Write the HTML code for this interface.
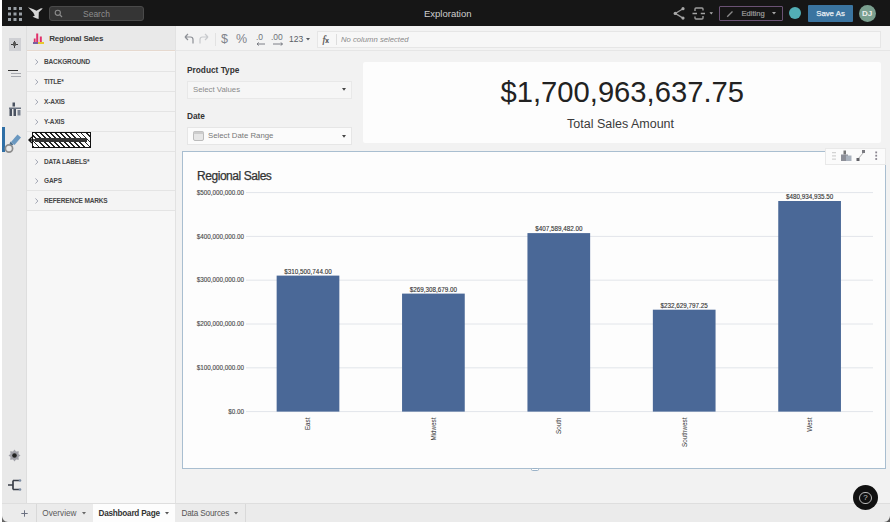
<!DOCTYPE html>
<html><head><meta charset="utf-8">
<style>
*{box-sizing:border-box;margin:0;padding:0}
html,body{width:890px;height:522px;overflow:hidden;background:#fff;font-family:"Liberation Sans",sans-serif}
.abs{position:absolute}
#app{position:absolute;left:2px;top:0;width:888px;height:522px;background:#f2f2f2;overflow:hidden}
#topbar{position:absolute;left:0;top:0;width:888px;height:26.5px;background:#161616}
#rail{position:absolute;left:0;top:26px;width:25px;height:477px;background:#e9e9e9;border-right:1px solid #dedede}
#panel{position:absolute;left:25px;top:26px;width:149px;height:477px;background:#f7f7f7;border-right:1px solid #e2e2e2}
#phead{position:absolute;left:0;top:0;width:148px;height:25px;background:#e9e9e9;border-bottom:1px solid #e6d9cf}
.row{position:absolute;left:0;width:148px;height:20px;background:#f4f4f4;border-bottom:1px solid #e4e4e4;font-size:6.5px;font-weight:bold;color:#474747;letter-spacing:-0.15px}
.row .chev{position:absolute;left:7.5px;top:7px;width:3.5px;height:6px}
.row .t{position:absolute;left:17px;top:6px;white-space:nowrap}
#toolbar{position:absolute;left:174px;top:26px;width:714px;height:25px;background:#f3f3f3;border-bottom:1px solid #e6e6e6}
#tabs{position:absolute;left:0;top:503px;width:888px;height:19px;background:#ebebeb;border-top:1px solid #dedede}
.tt{font-size:8.2px;white-space:nowrap;line-height:10px}
</style></head>
<body>
<div id="app">
  <div id="topbar">
    <!-- grid -->
    <svg class="abs" style="left:6px;top:7px" width="14" height="14" viewBox="0 0 14 14" fill="#9aa0a6">
      <rect x="0" y="0" width="3" height="3"/><rect x="5.5" y="0" width="3" height="3"/><rect x="11" y="0" width="3" height="3"/>
      <rect x="0" y="5.5" width="3" height="3"/><rect x="5.5" y="5.5" width="3" height="3"/><rect x="11" y="5.5" width="3" height="3"/>
      <rect x="0" y="11" width="3" height="3"/><rect x="5.5" y="11" width="3" height="3"/><rect x="11" y="11" width="3" height="3"/>
    </svg>
    <!-- logo -->
    <svg class="abs" style="left:24px;top:5px" width="20" height="16" viewBox="26 5 20 16">
      <path d="M28 7.3 L33.5 9.2 L36.5 10.8 L41 8.2 L42.8 8.6 L38.8 12.2 L38.6 19 L36.8 18.6 L32.6 16.8 L34.8 15.6 L33.2 12.6 Z" fill="#d6d6d6"/>
    </svg>
    <div class="abs" style="left:47px;top:6px;width:95px;height:15px;background:#353535;border:1px solid #4a4a4a;border-radius:3px"></div>
    <svg class="abs" style="left:52px;top:9px" width="9" height="9" viewBox="0 0 9 9"><circle cx="3.8" cy="3.8" r="2.6" stroke="#8a8a8a" stroke-width="1.1" fill="none"/><path d="M5.7 5.7 L8 8" stroke="#8a8a8a" stroke-width="1.2"/></svg>
    <div class="abs" style="left:81px;top:8.5px;font-size:8.5px;color:#8d8d8d">Search</div>
    <div class="abs" style="left:422px;top:8px;font-size:9.5px;color:#cfcfcf">Exploration</div>
    <!-- share -->
    
    <!-- sync -->
    
    
    <div class="abs" style="left:717px;top:5.5px;width:64px;height:15.5px;border:1px solid #6a5274;border-radius:1px"></div>
    <svg class="abs" style="left:724px;top:9.5px" width="8" height="8" viewBox="0 0 8 8"><path d="M1.2 6.8 L6.5 1.5" stroke="#8a8a8a" stroke-width="1.3"/></svg>
    <div class="abs" style="left:739.5px;top:8.5px;font-size:7.6px;color:#9c9c9c;-webkit-text-stroke:0.2px #9c9c9c">Editing</div>
    <svg class="abs" style="left:769.5px;top:12px" width="4" height="3" viewBox="0 0 4 3"><path d="M0 0 H4 L2 2.6Z" fill="#a8a8a8"/></svg>
    <div class="abs" style="left:787px;top:7px;width:12px;height:12px;border-radius:50%;background:#52aeb5"></div>
    <div class="abs" style="left:806px;top:4.5px;width:45px;height:17px;background:#3a74a0;border-radius:1px;color:#e8eef2;font-size:7.8px;-webkit-text-stroke:0.25px #e8eef2;text-align:center;line-height:17px">Save As</div>
    <div class="abs" style="left:856.5px;top:4.6px;width:17px;height:17px;border-radius:50%;background:#7a9f8f;color:#eee;font-size:8px;font-weight:bold;text-align:center;line-height:17px">DJ</div>
  </div>

  <div id="rail">
    <div class="abs" style="left:6.5px;top:12px;width:12px;height:12.5px;background:#cfd0d4"></div>
    <div class="abs" style="left:12px;top:15px;width:1.2px;height:6.5px;background:#3a3a3a"></div>
    <div class="abs" style="left:9.3px;top:17.6px;width:6.5px;height:1.2px;background:#3a3a3a"></div>
    <div class="abs" style="left:10.8px;top:16.4px;width:3.6px;height:3.6px;background:#555;border-radius:1px"></div>
    <div class="abs" style="left:6px;top:43.5px;width:10px;height:1.6px;background:#333"></div>
    <div class="abs" style="left:9px;top:46.5px;width:10px;height:1.2px;background:#a8aab0"></div>
    <div class="abs" style="left:9px;top:49.5px;width:10px;height:1.2px;background:#a8aab0"></div>
    <svg class="abs" style="left:6px;top:76px" width="14" height="15" viewBox="0 0 14 15"><path d="M4.5 0.5 h2.5 v4 h-2.5z" fill="#4a5260"/><path d="M1 5.5 h12 v1.5 h-12z" fill="#6a7280"/><path d="M1.5 7 h2.5 v7 h-2.5z M5.5 7 h2.5 v7 h-2.5z" fill="#4a5260"/><path d="M9.5 8 h3 v5.5 h-3z" fill="#7a8290"/></svg>
    <div class="abs" style="left:0;top:101px;width:3px;height:24.5px;background:#2f6fa6"></div>
    <svg class="abs" style="left:0px;top:100px" width="24" height="30" viewBox="2 126 24 30"><path d="M11 142 L17.5 134.5 L21 137.5 L14.5 145 Z" fill="#6a98c0"/><path d="M10.5 141.5 L13.5 144.5 L11 146 L9.5 144Z" fill="#4a7090"/><circle cx="9" cy="148.5" r="3.6" fill="none" stroke="#8c8c8c" stroke-width="1.7"/></svg>
    <svg class="abs" style="left:6px;top:423px" width="13" height="13" viewBox="0 0 13 13"><path d="M6.5 0.5 L8 2.5 L10.8 2.2 L10.5 5 L12.5 6.5 L10.5 8 L10.8 10.8 L8 10.5 L6.5 12.5 L5 10.5 L2.2 10.8 L2.5 8 L0.5 6.5 L2.5 5 L2.2 2.2 L5 2.5 Z" fill="#a0a0a8"/><circle cx="6.5" cy="6.5" r="2.3" fill="#222"/></svg>
    <svg class="abs" style="left:6px;top:453px" width="14" height="12" viewBox="0 0 14 12"><path d="M0 6 H5 M5 1.5 H11 M5 10.5 H11 M5 1.5 V10.5" stroke="#3a3f48" stroke-width="1.7" fill="none"/><circle cx="12" cy="1.5" r="1.3" fill="#7a8aa0"/><circle cx="12" cy="10.5" r="1.3" fill="#7a8aa0"/></svg>
  </div>
  <div id="panel">
    <div id="phead">
      <svg class="abs" style="left:6px;top:7px" width="11" height="11" viewBox="0 0 11 11">
        <rect x="3.2" y="0.5" width="2" height="8.5" fill="#e0306a"/><rect x="6.8" y="3.5" width="2" height="5.5" fill="#e0306a"/><rect x="0.8" y="5.5" width="1.8" height="3.5" fill="#e0306a"/>
        <rect x="0" y="9" width="5" height="2" fill="#7a5fa0"/><rect x="5" y="9" width="6" height="2" fill="#e8c830"/>
      </svg>
      <div class="abs" style="left:22.2px;top:7.5px;font-size:8px;letter-spacing:-0.2px;font-weight:bold;color:#3a3a3a">Regional Sales</div>
    </div>
<div class="row" style="top:26.0px"><svg class="chev" viewBox="0 0 4 7"><path d="M0.5 0.5 L3.3 3.5 L0.5 6.5" stroke="#8a8fa0" stroke-width="0.9" fill="none"/></svg><div class="t">BACKGROUND</div></div>
<div class="row" style="top:45.9px"><svg class="chev" viewBox="0 0 4 7"><path d="M0.5 0.5 L3.3 3.5 L0.5 6.5" stroke="#8a8fa0" stroke-width="0.9" fill="none"/></svg><div class="t">TITLE*</div></div>
<div class="row" style="top:65.8px"><svg class="chev" viewBox="0 0 4 7"><path d="M0.5 0.5 L3.3 3.5 L0.5 6.5" stroke="#8a8fa0" stroke-width="0.9" fill="none"/></svg><div class="t">X-AXIS</div></div>
<div class="row" style="top:85.7px"><svg class="chev" viewBox="0 0 4 7"><path d="M0.5 0.5 L3.3 3.5 L0.5 6.5" stroke="#8a8fa0" stroke-width="0.9" fill="none"/></svg><div class="t">Y-AXIS</div></div>
<div class="row" style="top:105.6px"><div class="abs" style="left:4.5px;top:0.2px;width:59px;height:16px;border:1px solid #111;background:repeating-linear-gradient(45deg,#222 0 1.3px,#fafafa 1.3px 3.6px)"></div><div class="abs" style="left:8px;top:6px;width:52px;height:4px;background:#333"></div><svg class="abs" style="left:1px;top:4px" width="8" height="8" viewBox="0 0 8 8"><path d="M7 4 H1.5 M4 1 L1 4 L4 7" stroke="#111" stroke-width="1.4" fill="none"/></svg></div>
<div class="row" style="top:125.5px"><svg class="chev" viewBox="0 0 4 7"><path d="M0.5 0.5 L3.3 3.5 L0.5 6.5" stroke="#8a8fa0" stroke-width="0.9" fill="none"/></svg><div class="t">DATA LABELS*</div></div>
<div class="row" style="top:145.4px"><svg class="chev" viewBox="0 0 4 7"><path d="M0.5 0.5 L3.3 3.5 L0.5 6.5" stroke="#8a8fa0" stroke-width="0.9" fill="none"/></svg><div class="t">GAPS</div></div>
<div class="row" style="top:165.3px"><svg class="chev" viewBox="0 0 4 7"><path d="M0.5 0.5 L3.3 3.5 L0.5 6.5" stroke="#8a8fa0" stroke-width="0.9" fill="none"/></svg><div class="t">REFERENCE MARKS</div></div>
  </div>

  <div id="toolbar"></div>

  <div id="tabs"></div>
</div>

<div id="ov" style="position:absolute;left:0;top:0;width:890px;height:522px">

  <svg class="abs" style="left:0;top:0" width="890" height="26" viewBox="0 0 890 26">
    <path d="M683 8.7 L675.3 13.4 L683 18.1" stroke="#9a9a9a" stroke-width="1.3" fill="none"/>
    <circle cx="683" cy="8.7" r="1.6" fill="#a8a8a8"/><circle cx="675.3" cy="13.4" r="1.7" fill="#a8a8a8"/><circle cx="683" cy="18.1" r="1.6" fill="#a8a8a8"/>
    <path d="M695 11 V9 Q695 8 696 8 H702 Q703 8 703 9 V10.5 M703 16 V18 Q703 19 702 19 H696 Q695 19 695 18 V16.5" stroke="#9c9c9c" stroke-width="1.4" fill="none"/>
    <path d="M692.5 13.5 H697 M700.8 13.5 H705" stroke="#a5a5a5" stroke-width="1.4"/>
    <path d="M709.5 12.3 H713 L711.25 14.6 Z" fill="#b0b0b0"/>
  </svg>
  <!-- toolbar -->
  <svg class="abs" style="left:184px;top:33px" width="10" height="11" viewBox="0 0 10 11"><path d="M1 4 L4 1 M1 4 L4 7 M1 4 H6.5 Q9 4 9 6.5 V10.5" stroke="#8d9096" stroke-width="1.2" fill="none"/></svg>
  <svg class="abs" style="left:199px;top:33px" width="10" height="11" viewBox="0 0 10 11"><path d="M9 4 L6 1 M9 4 L6 7 M9 4 H3.5 Q1 4 1 6.5 V10.5" stroke="#c8cacd" stroke-width="1.2" fill="none"/></svg>
  <div class="abs" style="left:214.5px;top:33px;width:1px;height:13px;background:#e2e2e2"></div>
  <div class="abs" style="left:221px;top:32px;font-size:12.5px;color:#80848b">$</div>
  <div class="abs" style="left:236px;top:32px;font-size:12.5px;color:#80848b">%</div>
  <div class="abs" style="left:256px;top:32px;font-size:8.5px;color:#6f737a">.0</div>
  <svg class="abs" style="left:256px;top:41.5px" width="10" height="4" viewBox="0 0 10 4"><path d="M1 2 H9 M1 2 L2.8 0.5 M1 2 L2.8 3.5" stroke="#6f737a" stroke-width="0.9" fill="none"/></svg>
  <div class="abs" style="left:271px;top:32px;font-size:8.5px;color:#6f737a">.00</div>
  <svg class="abs" style="left:272px;top:41.5px" width="12" height="4" viewBox="0 0 12 4"><path d="M1 2 H10.5 M10.5 2 L8.7 0.5 M10.5 2 L8.7 3.5" stroke="#6f737a" stroke-width="0.9" fill="none"/></svg>
  <div class="abs" style="left:289px;top:34px;font-size:8.5px;color:#5a5e65">123</div>
  <svg class="abs" style="left:305.5px;top:38.3px" width="4" height="3" viewBox="0 0 4 3"><path d="M0 0 H4 L2 2.6Z" fill="#555a60"/></svg>
  <div class="abs" style="left:317px;top:31px;width:564px;height:17px;border:1px solid #e6e6e6;background:#f7f7f7"></div>
  <div class="abs" style="left:322.5px;top:33.5px;font-size:10px;font-family:'Liberation Serif',serif;font-style:italic;color:#555;-webkit-text-stroke:0.2px #555">f<span style="font-size:6.5px;font-style:normal;font-family:'Liberation Sans',sans-serif;font-weight:bold">x</span></div>
  <div class="abs" style="left:335.5px;top:34px;width:1px;height:11px;background:#ddd"></div>
  <div class="abs" style="left:341px;top:35.2px;font-size:7.7px;font-style:italic;color:#8a8a8a">No column selected</div>

  <!-- filters -->
  <div class="abs" style="left:187px;top:65px;font-size:8.3px;font-weight:bold;color:#333">Product Type</div>
  <div class="abs" style="left:187px;top:81px;width:165px;height:18px;border:1px solid #e8e8e8;background:#f6f6f6"></div>
  <div class="abs" style="left:193px;top:85px;font-size:7.8px;color:#8a8a8a">Select Values</div>
  <svg class="abs" style="left:341.5px;top:88px" width="4" height="3" viewBox="0 0 4 3"><path d="M0 0 H4 L2 2.8Z" fill="#444"/></svg>
  <div class="abs" style="left:187px;top:111px;font-size:8.3px;font-weight:bold;color:#333">Date</div>
  <div class="abs" style="left:187px;top:127px;width:165px;height:18px;border:1px solid #e6e6e6;background:#fbfbfb"></div>
  <svg class="abs" style="left:193px;top:131px" width="11" height="10" viewBox="0 0 11 10"><rect x="0.5" y="0.5" width="10" height="9" rx="1.5" fill="#e6e6e6" stroke="#bbb"/><rect x="0.5" y="0.5" width="10" height="2.5" fill="#ccc"/></svg>
  <div class="abs" style="left:208px;top:131px;font-size:7.8px;color:#777">Select Date Range</div>
  <svg class="abs" style="left:341.5px;top:134.5px" width="4" height="3" viewBox="0 0 4 3"><path d="M0 0 H4 L2 2.8Z" fill="#444"/></svg>

  <!-- KPI -->
  <div class="abs" style="left:363px;top:62px;width:518px;height:81px;background:#fdfdfd;border-radius:2px"></div>
  <div class="abs" style="left:500.5px;top:76px;font-size:29.2px;color:#222;white-space:nowrap" id="kpi">$1,700,963,637.75</div>
  <div class="abs" style="left:567px;top:117px;font-size:12.5px;color:#3a3a3a;white-space:nowrap" id="kpil">Total Sales Amount</div>

  <!-- chart box -->
  <div class="abs" style="left:182px;top:151px;width:704px;height:318px;border:1px solid #a9bed0;background:#fdfdfd"></div>
  <div class="abs" style="left:824.5px;top:147.5px;width:61px;height:17.5px;border:1px solid #e9e9e9;background:#fbfbfb"></div>
  <svg class="abs" style="left:820px;top:142px" width="70" height="28" viewBox="820 142 70 28">
    <path d="M832 152.7 H836 M832 155.9 H836 M832 159.1 H836" stroke="#c8c8c8" stroke-width="1"/>
    <path d="M843.5 150.5 h2.5 v4 h-2.5z" fill="#777"/>
    <path d="M841 154.5 h7 v6.5 h-7z" fill="#8d8f98"/>
    <path d="M846 155.5 h5.5 v5.5 h-5.5z" fill="#aab2bd"/>
    <path d="M858 159 L863.5 152.5" stroke="#999" stroke-width="0.8"/>
    <rect x="862" y="150" width="3" height="3" fill="#7a7a80"/>
    <rect x="856.5" y="158" width="3" height="3" fill="#606066"/>
    <rect x="875.3" y="151.5" width="1.8" height="1.8" fill="#8a8590"/>
    <rect x="875.3" y="154.8" width="1.8" height="1.8" fill="#8a8590"/>
    <rect x="875.3" y="158.1" width="1.8" height="1.8" fill="#8a8590"/>
  </svg>
  <div class="abs" style="left:531px;top:467.5px;width:8px;height:3px;border:1px solid #9bb3c8;border-radius:2px;background:#fff"></div>
  <div class="abs" style="left:197px;top:168.5px;font-size:12px;letter-spacing:-0.45px;-webkit-text-stroke:0.25px #333;color:#333;white-space:nowrap" id="ctitle">Regional Sales</div>
  <svg class="abs" style="left:0;top:0" width="890" height="522" viewBox="0 0 890 522" font-family="Liberation Sans, sans-serif"><line x1="246" y1="411.6" x2="873" y2="411.6" stroke="#e2e5ea" stroke-width="1"/><text x="244" y="413.8" font-size="6.3" fill="#4a4a4a" stroke="#4a4a4a" stroke-width="0.12" text-anchor="end">$0.00</text><line x1="246" y1="367.8" x2="873" y2="367.8" stroke="#e2e5ea" stroke-width="1"/><text x="244" y="370.0" font-size="6.3" fill="#4a4a4a" stroke="#4a4a4a" stroke-width="0.12" text-anchor="end">$100,000,000.00</text><line x1="246" y1="324.0" x2="873" y2="324.0" stroke="#e2e5ea" stroke-width="1"/><text x="244" y="326.2" font-size="6.3" fill="#4a4a4a" stroke="#4a4a4a" stroke-width="0.12" text-anchor="end">$200,000,000.00</text><line x1="246" y1="280.2" x2="873" y2="280.2" stroke="#e2e5ea" stroke-width="1"/><text x="244" y="282.4" font-size="6.3" fill="#4a4a4a" stroke="#4a4a4a" stroke-width="0.12" text-anchor="end">$300,000,000.00</text><line x1="246" y1="236.4" x2="873" y2="236.4" stroke="#e2e5ea" stroke-width="1"/><text x="244" y="238.6" font-size="6.3" fill="#4a4a4a" stroke="#4a4a4a" stroke-width="0.12" text-anchor="end">$400,000,000.00</text><line x1="246" y1="192.6" x2="873" y2="192.6" stroke="#e2e5ea" stroke-width="1"/><text x="244" y="194.8" font-size="6.3" fill="#4a4a4a" stroke="#4a4a4a" stroke-width="0.12" text-anchor="end">$500,000,000.00</text><rect x="276.65" y="275.6" width="62.7" height="136.0" fill="#4a6897"/><text x="308.0" y="273.6" font-size="6.3" fill="#333" stroke="#333" stroke-width="0.12" text-anchor="middle">$310,500,744.00</text><text transform="translate(310.4,417.5) rotate(-90)" font-size="6.3" fill="#333" text-anchor="end">East</text><rect x="402.05" y="293.6" width="62.7" height="118.0" fill="#4a6897"/><text x="433.4" y="291.6" font-size="6.3" fill="#333" stroke="#333" stroke-width="0.12" text-anchor="middle">$269,308,679.00</text><text transform="translate(435.8,417.5) rotate(-90)" font-size="6.3" fill="#333" text-anchor="end">Midwest</text><rect x="527.45" y="233.1" width="62.7" height="178.5" fill="#4a6897"/><text x="558.8" y="231.1" font-size="6.3" fill="#333" stroke="#333" stroke-width="0.12" text-anchor="middle">$407,589,482.00</text><text transform="translate(561.2,417.5) rotate(-90)" font-size="6.3" fill="#333" text-anchor="end">South</text><rect x="652.85" y="309.7" width="62.7" height="101.9" fill="#4a6897"/><text x="684.2" y="307.7" font-size="6.3" fill="#333" stroke="#333" stroke-width="0.12" text-anchor="middle">$232,629,797.25</text><text transform="translate(686.6,417.5) rotate(-90)" font-size="6.3" fill="#333" text-anchor="end">Southwest</text><rect x="778.25" y="201.0" width="62.7" height="210.6" fill="#4a6897"/><text x="809.6" y="199.0" font-size="6.3" fill="#333" stroke="#333" stroke-width="0.12" text-anchor="middle">$480,934,935.50</text><text transform="translate(812.0,417.5) rotate(-90)" font-size="6.3" fill="#333" text-anchor="end">West</text></svg>


  <!-- tabs -->
  <svg class="abs" style="left:21px;top:509.5px" width="7" height="7" viewBox="0 0 7 7"><path d="M3.5 0.3 V6.7 M0.3 3.5 H6.7" stroke="#6a7080" stroke-width="1"/></svg>
  <div class="abs" style="left:36px;top:504px;width:1px;height:18px;background:#d9d9d9"></div>
  <div class="abs tt" style="left:42.3px;top:508.7px;color:#5a5a5a">Overview</div>
  <svg class="abs" style="left:82px;top:512px" width="4" height="3" viewBox="0 0 4 3"><path d="M0 0 H4 L2 2.6Z" fill="#666"/></svg>
  <div class="abs" style="left:93px;top:504px;width:82px;height:18px;background:#fdfdfd"></div>
  <div class="abs tt" style="left:98.6px;top:508.7px;color:#333;font-weight:bold;letter-spacing:-0.25px">Dashboard Page</div>
  <svg class="abs" style="left:164.5px;top:512px" width="4" height="3" viewBox="0 0 4 3"><path d="M0 0 H4 L2 2.6Z" fill="#555"/></svg>
  <div class="abs tt" style="left:181.4px;top:508.7px;color:#555;letter-spacing:-0.15px">Data Sources</div>
  <svg class="abs" style="left:233.7px;top:512px" width="4" height="3" viewBox="0 0 4 3"><path d="M0 0 H4 L2 2.6Z" fill="#666"/></svg>
  <div class="abs" style="left:245px;top:504px;width:1px;height:18px;background:#d9d9d9"></div>

  <svg class="abs" style="left:0;top:512px" width="10" height="10" viewBox="0 0 10 10"><path d="M2 4 Q2.5 9.5 8 10 H2 Z" fill="#666"/></svg>
  <svg class="abs" style="left:880px;top:512px" width="10" height="10" viewBox="0 0 10 10"><path d="M10 4 Q9.5 9.5 4 10 H10 Z" fill="#555"/></svg>
  <!-- help -->
  <div class="abs" style="left:853px;top:485px;width:25px;height:25px;border-radius:50%;background:#111"></div>
  <div class="abs" style="left:859.3px;top:491.5px;width:12.5px;height:12.5px;border-radius:50%;border:1px solid #bbb;color:#ccc;font-size:8px;text-align:center;line-height:10.5px">?</div>
</div>
</body></html>
